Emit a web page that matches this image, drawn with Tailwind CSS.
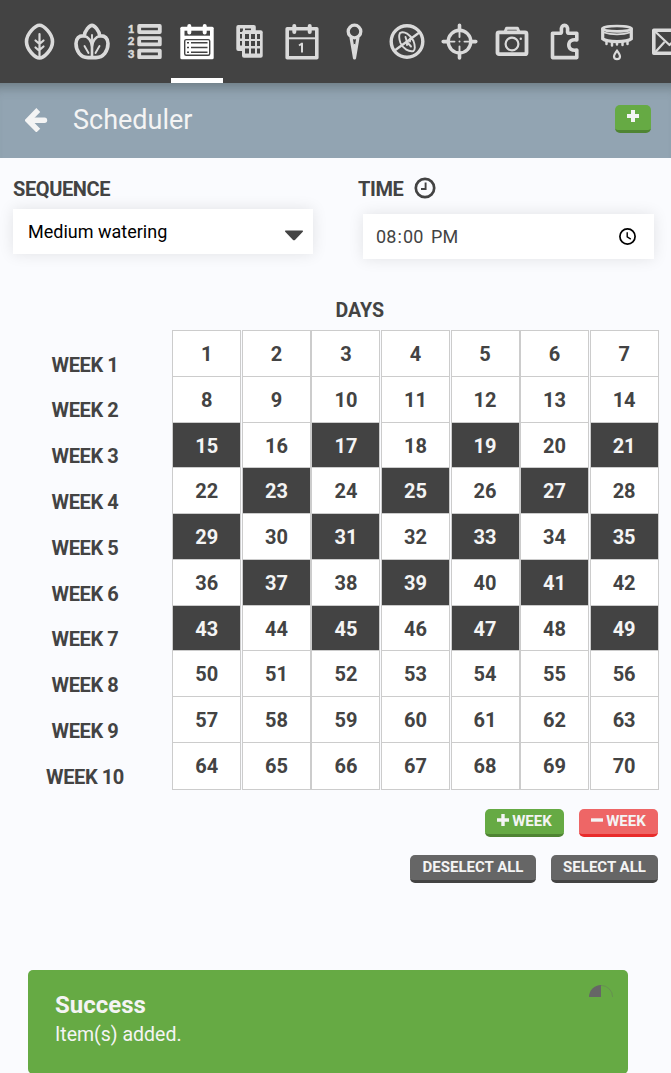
<!DOCTYPE html>
<html lang="en">
<head>
<meta charset="utf-8">
<title>Scheduler</title>
<script src="https://cdn.jsdelivr.net/npm/@tailwindcss/browser@4"></script>
</head>
<body class="h-[1073px] overflow-hidden bg-[#fafbfe] font-['Roboto',sans-serif] text-[#434343]">
<nav class="relative z-10 flex h-[83px] overflow-hidden bg-[#434343] pl-[13px] text-[#dadada]">
  <a class="flex w-[52.5px] shrink-0 justify-center pt-6"><svg class="size-9 overflow-visible" viewBox="-.5 0 36 36" fill="none" stroke="currentColor" stroke-width="3.6" stroke-linecap="round" stroke-linejoin="round"><path d="M18 1.300C14 1.300 5 9.500 5 17.700S14 34 18 34s13-8 13-16.300S22 1.300 18 1.300Z"/><path stroke-width="2.200" d="M18 10v23M18 20l-4-3.500M18 20l4-3.500M18 27l-4-3.500M18 26l4-3.500"/></svg></a>
  <a class="flex w-[52.5px] shrink-0 justify-center pt-6"><svg class="size-9 overflow-visible" viewBox="0 0 36 36" fill="none" stroke="currentColor" stroke-width="3.600" stroke-linecap="round" stroke-linejoin="round"><path d="M10.200 12C10.800 6.500 15.500 1.400 18 1.400S25.200 6.500 25.800 12C31 11.400 34 14.500 34 19.500C34 27 29.500 33.600 22 33.600H14C6.500 33.600 2 27 2 19.500C2 14.500 5 11.400 10.200 12Z"/><path stroke-width="2.600" d="M10.200 12C14 12.500 18 17 18 23M25.800 12C22 12.500 18 17 18 23V33"/><path stroke-width="1.900" d="M18 11v6M10.500 22l4 7M25.500 22l-4 7"/></svg></a>
  <a class="flex w-[52.5px] shrink-0 justify-center pt-6"><svg class="size-9 overflow-visible" viewBox="-.5 0 36 36" fill="none" stroke="currentColor"><g stroke-width="3.800" stroke-linejoin="round"><rect x="12.700" y="1.900" width="20.600" height="6.200"/><rect x="12.700" y="14.200" width="20.600" height="6.200"/><rect x="12.700" y="26.600" width="20.600" height="6.600"/></g><g fill="currentColor" stroke-width=".4" font-family="Lato" font-weight="900" font-size="11.500" text-anchor="middle"><text x="4.500" y="9">1</text><text x="4.500" y="21.400">2</text><text x="4.500" y="33.800">3</text></g></svg></a>
  <a class="ml-[.5px] flex w-[52px] shrink-0 justify-center border-b-[5px] border-white pt-6 text-white"><svg class="size-9 overflow-visible" viewBox="0 0 36 36"><rect x="1.300" y="2.700" width="33.400" height="32.500" rx="1.500" fill="currentColor"/><path fill="#434343" d="M5.500 6.700h25.500v5h-25.500z"/><path stroke="currentColor" stroke-width="4" stroke-linecap="round" d="M10.300 2v6.500M25.700 2v6.500"/><rect x="5.700" y="15.600" width="25" height="15.600" rx="1.500" fill="currentColor" stroke="#434343" stroke-width="1.400"/><path stroke="#434343" stroke-width="1.600" d="M8 18.700h2M12 18.700h16.500M8 23.500h2M12 23.500h16.500M8 28.200h2M12 28.200h16.500"/></svg></a>
  <a class="flex w-[52.5px] shrink-0 justify-center pt-6"><svg class="size-9 overflow-visible" viewBox="-.5 0 36 36"><rect x="4.800" y="1" width="19.500" height="26" rx="2" fill="currentColor"/><path fill="#434343" d="M8.500 4.500h3v3.500h-3zM13.500 4.500h6v2h-6zM8.500 10h2.200v4.500H8.500zM8.500 17h2.200v4.500H8.500z"/><rect x="10.500" y="6.300" width="20.700" height="27.500" rx="2" fill="currentColor"/><path fill="#434343" d="M13.500 10h4v5h-4zM19.500 10h4v5h-4zM25.500 10h3v5h-3zM13.500 17h4v5h-4zM19.500 17h4v5h-4zM25.500 17h3v5h-3zM13.500 24.500h4v5h-4zM19.500 24.500h4v5h-4zM25.500 24.500h3v5h-3z"/></svg></a>
  <a class="flex w-[52.5px] shrink-0 justify-center pt-6"><svg class="size-9 overflow-visible" viewBox="0 0 36 36" fill="none" stroke="currentColor"><path stroke-width="3.600" stroke-linejoin="round" d="M3.200 4.700h29.600v29H3.200z"/><path stroke-width="2" d="M4 14.300h28"/><path stroke-width="4" stroke-linecap="round" d="M10.300 2v6M25.700 2v6"/><path stroke-width="2" stroke-linejoin="round" d="M15 21.500l3-2v9"/></svg></a>
  <a class="flex w-[52.5px] shrink-0 justify-center pt-6"><svg class="size-9 overflow-visible" viewBox="-.5 0 36 36" fill="none" stroke="currentColor"><circle cx="18" cy="7.500" r="6.300" stroke-width="3.300"/><path stroke-width="3.200" stroke-linejoin="round" d="M14.500 13.300L18 34l3.500-20.700"/><path stroke-width="1.500" d="M18 20v13"/></svg></a>
  <a class="flex w-[52.5px] shrink-0 justify-center pt-6"><svg class="size-9 overflow-visible" viewBox="0 0 36 36" fill="none" stroke="currentColor" stroke-linecap="round"><circle cx="18" cy="17.500" r="15.800" stroke-width="3.400"/><path stroke-width="2.300" d="M7 25.500L29 9.500"/><path stroke-width="1.900" d="M11 9C15 6.500 21.500 10.500 24.500 17C26.500 22 26 26 24.500 27C20 28 14 25 11.500 19C10 15 9.700 11.500 11 9ZM16.500 13l1.500 5v3M18.500 18.500l3.500 4M21 14.500v3"/></svg></a>
  <a class="flex w-[52.5px] shrink-0 justify-center pt-6"><svg class="size-9 overflow-visible" viewBox="-.5 0 36 36" fill="none" stroke="currentColor" stroke-linecap="round"><circle cx="18" cy="17.600" r="11.300" stroke-width="3.400"/><path stroke-width="3.600" d="M18 1.300v5M18 29v5M1.700 17.600h5M29.300 17.600h5"/><path stroke-width="1.900" d="M18 6v7M18 22.500v6M7 17.600h6M23 17.600h6"/><circle cx="18" cy="17.600" r="1" fill="currentColor" stroke="none"/></svg></a>
  <a class="flex w-[52.5px] shrink-0 justify-center pt-6"><svg class="size-9 overflow-visible" viewBox="0 0 36 36" fill="none" stroke="currentColor" stroke-linejoin="round"><rect x="3.500" y="8.400" width="29" height="21.800" rx="1.500" stroke-width="3.800"/><path stroke-width="3" d="M11 8L12.500 4.300h11L25 8"/><circle cx="18" cy="20" r="6.400" stroke-width="2.200"/><circle cx="26.800" cy="14.800" r="1.200" fill="currentColor" stroke="none"/></svg></a>
  <a class="flex w-[52.5px] shrink-0 justify-center pt-6"><svg class="size-9 overflow-visible" viewBox="-.5 0 36 36" fill="none" stroke="currentColor" stroke-width="3.600" stroke-linejoin="round"><path d="M6 9.300h7.600c1.400 0 1.500-1 1.300-3C14.700 3 16 1.400 18 1.400s3.300 1.600 3.100 4.900c-.2 2-.1 3 1.300 3H30.300v6.700c-5-.8-8 1.200-8 5s3 5.800 8 5v7.600H6Z"/></svg></a>
  <a class="flex w-[52.5px] shrink-0 justify-center pt-6"><svg class="size-9 overflow-visible" viewBox="0 0 36 36" fill="none" stroke="currentColor" stroke-linecap="round"><path stroke-width="3.200" d="M3.700 4.800v10C8 18.500 28 18.500 32.300 14.800v-10"/><ellipse cx="18" cy="4.700" rx="14.500" ry="2.700" stroke-width="2.600"/><path stroke-width="1.600" d="M5 8.500C12 11 24 11 31 8.500"/><path stroke-width="2.500" d="M7.500 17v3M13 18v3.500M18 18v2.500M23.500 18v3M28.500 17v3"/><path stroke-width="2.200" stroke-linejoin="round" d="M18 26.500c-1.200 2-3 4-3 5.700a3 3 0 0 0 6 0c0-1.700-1.800-3.700-3-5.700Z"/></svg></a>
  <a class="flex w-[52.5px] shrink-0 justify-center pt-6"><svg class="size-9 overflow-visible" viewBox="-.5 0 36 36" fill="none" stroke="currentColor" stroke-linejoin="round"><rect x="2.300" y="6.200" width="31.500" height="23" stroke-width="3.600"/><path stroke-width="2.200" d="M3 7l15 14L33 7M3 29l10-11M33 29L23 18"/></svg></a>
</nav>

<header class="relative flex h-[75px] items-center bg-[#92a4b2] pl-[24.5px] pr-5 text-[#f4f4f4] shadow-[inset_0_14px_12px_-10px_rgba(60,70,70,0.45)]">
  <svg class="mb-px h-6 w-[23px]" viewBox=".5 0 23 24" fill="none" stroke="currentColor" stroke-width="5.400"><path d="M13.800 2L3.700 12.300 13.800 22.600"/><path stroke-linecap="round" d="M5 12.300h15"/></svg>
  <h1 class="ml-[25.5px] -mt-px text-[27px] font-normal leading-8">Scheduler</h1>
  <button class="-mt-[2px] mb-px ml-auto flex h-7 w-9 justify-center rounded-[5px] border-b-[3px] border-[#4f8433] bg-[#66aa44] pt-[5px]"><svg class="size-3" viewBox="0 0 12 12" fill="none" stroke="#f4f4f4" stroke-width="4"><path stroke-linejoin="round" d="M6 0v12M0 6h12"/></svg></button>
</header>

<main class="pl-[13px] pr-[12px] pt-5">
  <section class="flex">
    <div class="w-[345px]">
      <h2 class="flex h-[22px] items-center text-[20px] font-bold leading-[22px] tracking-[-0.4px]">SEQUENCE</h2>
      <div class="mt-[9px] flex h-[45px] w-[300px] items-center bg-white pl-[15px] pr-[9px] text-[18px] text-black shadow-[0_0_15px_rgba(0,0,0,0.1)]"><span>Medium watering</span><svg class="ml-auto mt-[7px] h-[11px] w-5" viewBox="0 0 20 11"><path fill="#434343" d="M1.500.5h17q1 .2.300 1.200L11.200 9.700Q10 11 8.800 9.700L1.200 1.700Q.5.700 1.500.5Z"/></svg></div>
    </div>
    <div class="w-[300px]">
      <h2 class="flex h-[22px] items-center gap-[10.5px] text-[20px] font-bold leading-[22px] tracking-[-0.4px]">TIME<svg class="-mt-[3px] size-[22px]" viewBox="0 0 22 22" fill="none" stroke="currentColor"><circle cx="11" cy="11" r="9.200" stroke-width="2.700"/><path stroke-width="1.900" d="M11.600 5.500v6.500H7"/></svg></h2>
      <div class="ml-[5px] mt-[14px] flex h-[45px] w-[291px] items-center bg-white pl-[13px] pr-[18px] text-[18px] shadow-[0_0_15px_rgba(0,0,0,0.1)]"><span class="tracking-[.15px]">08<span class="px-px">:</span>00<span class="ml-[7.5px]">PM</span></span><svg class="ml-auto size-[17px]" viewBox="0 0 17 17" fill="none" stroke="#000"><circle cx="8.500" cy="8.500" r="7.600" stroke-width="1.700"/><path stroke-width="1.400" d="M8.200 4.200v4.700l3.600 2.200"/></svg></div>
    </div>
  </section>

  <section class="mt-[40px] h-[492px] text-[20px] font-bold">
    <h2 class="ml-[322.5px] h-6 text-[19.6px] leading-6">DAYS</h2>
    <div class="mt-[7px] flex">
      <div id="weeks" class="mt-[11.7px] w-[144px] shrink-0 text-center"></div>
      <div id="days" class="ml-[15.35px] grid h-[460px] w-[486.85px] shrink-0 grid-cols-7 grid-rows-[repeat(9,45.78px)_48px]"></div>
    </div>
  </section>

  <section class="mt-[18px] flex flex-col items-end gap-[18px] pr-px text-[15px] font-bold leading-4 text-[#f4f4f4]">
    <div class="flex gap-[15px]">
      <button class="flex h-7 w-[79px] justify-center gap-[3px] rounded-[5px] border-b-[3px] border-[#4f8433] bg-[#66aa44] pt-1"><svg class="mt-px size-3" viewBox="0 0 12 12" stroke="#f4f4f4" stroke-width="3.400"><path d="M6 0v12M0 6h12"/></svg>WEEK</button>
      <button class="flex h-7 w-[79px] justify-center gap-[3px] rounded-[5px] border-b-[3px] border-[#e92b2b] bg-[#ee6666] pt-1"><svg class="mt-px size-3" viewBox="0 0 12 12" stroke="#f4f4f4" stroke-width="3.400"><path d="M0 6h12"/></svg>WEEK</button>
    </div>
    <div class="flex gap-[15px]">
      <button class="flex h-7 w-[126px] justify-center rounded-[5px] border-b-[3px] border-[#434343] bg-[#666666] pt-1">DESELECT ALL</button>
      <button class="flex h-7 w-[107px] justify-center rounded-[5px] border-b-[3px] border-[#434343] bg-[#666666] pt-1">SELECT ALL</button>
    </div>
  </section>

  <aside class="ml-[15px] mt-[87px] flex h-[104px] w-[600px] justify-between rounded-[5px] bg-[#66aa44] pl-[27px] pr-[15px] text-[#f4f4f4]">
    <div class="pt-[21px]"><h3 class="text-[24px] font-bold leading-7">Success</h3><p class="mt-px text-[19.500px] font-normal leading-[30px]">Item(s) added.</p></div>
    <svg class="mt-[15px] size-6" viewBox="0 0 24 24"><path fill="#666" d="M12 12V0A12 12 0 0 0 0 12Z"/><path fill="none" stroke="#666" stroke-opacity=".55" stroke-width=".7" d="M12 .4A11.600 11.600 0 0 1 23.600 12"/></svg>
  </aside>
</main>
<script>
  const active = new Set([15,17,19,21,23,25,27,29,31,33,35,37,39,41,43,45,47,49]);
  let weeks = '', days = '';
  for (let w = 1; w <= 10; w++) weeks += `<div class="h-[45.78px] leading-[46px] tracking-[-0.4px]">WEEK ${w}</div>`;
  for (let d = 1; d <= 70; d++) {
    const edge = d > 63 ? 'border-y' : 'border-t';
    const tone = active.has(d) ? 'bg-[#434343] text-[#f4f4f4]' : 'bg-white';
    days += `<div class="w-[69px] border-x ${edge} border-[#cccccc] ${tone} text-center leading-[46px]">${d}</div>`;
  }
  document.getElementById('weeks').innerHTML = weeks;
  document.getElementById('days').innerHTML = days;
</script>
</body>
</html>
